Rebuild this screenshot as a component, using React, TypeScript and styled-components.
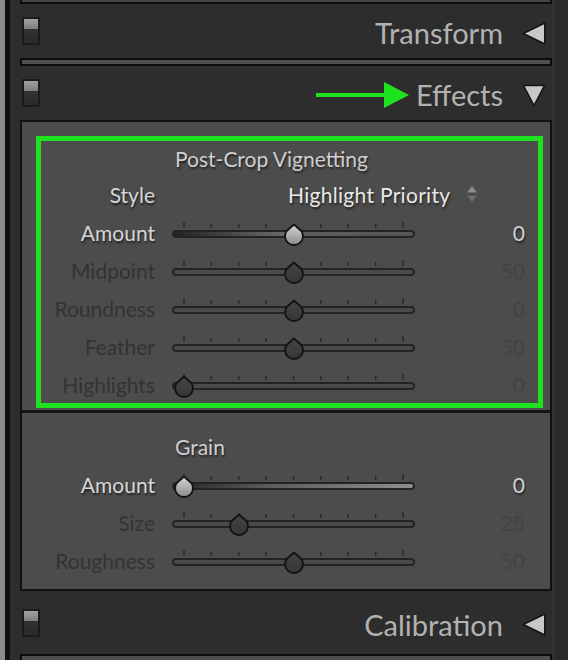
import React, { useId } from 'react';
import styled, { createGlobalStyle } from 'styled-components';

const Global = createGlobalStyle`
  html, body { margin: 0; padding: 0; background: #2d2d2d; }
  body { font-family: Lato, "Open Sans", sans-serif; }
`;

const Screen = styled.div`
  display: flex;
  width: 568px;
  height: 660px;
  overflow: hidden;
  background: #2d2d2d;
`;

const LeftEdge = styled.div`
  flex: 0 0 5px;
  background: #8a8a8a;
  border-right: 5px solid #0f0f0f;
`;

const RightEdge = styled.div`
  flex: 0 0 14px;
  background: #2a2a2a;
  border-left: 1px solid #383838;
`;

const Main = styled.div`
  flex: 1;
  display: flex;
  flex-direction: column;
  padding: 0 1px 0 10px;
  background: #2d2d2d;
`;

const Stub = styled.div`
  flex: 0 0 auto;
  height: 2px;
  background: #454545;
  border: 2px solid #0d0d0d;
  border-top: none;
`;

const CollapsedBar = styled.div`
  flex: 0 0 auto;
  height: 4px;
  background: #4f4f4f;
  border: 2px solid #0c0c0c;
`;

const Header = styled.div<{ $h: number }>`
  flex: 0 0 auto;
  display: flex;
  align-items: center;
  height: ${(p) => p.$h}px;
  padding: 0 6px 0 2px;
`;

const Switch = styled.div`
  width: 18px;
  height: 28px;
  box-sizing: border-box;
  border: 2px solid #1b1b1b;
  background: linear-gradient(#a2a2a2, #7d7d7d 42%, #323232 42%, #2a2a2a);
`;

const TitleGroup = styled.div`
  margin-left: auto;
  display: flex;
  align-items: center;
`;

const HeaderTitle = styled.span`
  margin-top: 3px;
  font-size: 29px;
  line-height: 1;
  color: #b2b2b2;
`;

const CaretSvg = styled.svg`
  margin-left: 19px;
  margin-top: 4px;
  display: block;
`;

const ArrowSvg = styled.svg`
  display: block;
  margin-right: 6px;
  margin-top: 3px;
`;

const Panel = styled.div`
  flex: 0 0 auto;
  display: flex;
  flex-direction: column;
  border: 2px solid #111;
  background: #4c4c4c;
`;

const HighlightBox = styled.div`
  margin: 14px 7px 2px 14px;
  border: 5px solid #1fe21f;
  display: flex;
  flex-direction: column;
`;

const Divider = styled.div`
  height: 3px;
  background: #161616;
`;

const GrainSection = styled.div`
  display: flex;
  flex-direction: column;
  padding: 14px 0 10px 19px;
`;

const SectionTitle = styled.div<{ $h: number }>`
  height: ${(p) => p.$h}px;
  display: flex;
  align-items: center;
  padding-left: 134px;
  font-size: 21px;
  color: #cfcfcf;
  text-shadow: 1px 2px 2px rgba(0, 0, 0, 0.55);
`;

const Row = styled.div`
  height: 38px;
  display: flex;
  align-items: center;
`;

const Label = styled.span<{ $on: boolean }>`
  width: 114px;
  text-align: right;
  font-size: 21px;
  color: ${(p) => (p.$on ? '#d6d6d6' : '#333333')};
  text-shadow: ${(p) => (p.$on ? '1px 2px 2px rgba(0,0,0,0.55)' : 'none')};
`;

const StyleValue = styled.span`
  margin-left: 133px;
  font-size: 21px;
  letter-spacing: 0.3px;
  color: #e8e8e8;
  text-shadow: 1px 2px 2px rgba(0, 0, 0, 0.55);
`;

const StepperSvg = styled.svg`
  display: block;
  margin-left: 16px;
`;

const SliderBox = styled.div`
  position: relative;
  align-self: stretch;
  width: 243px;
  margin-left: 17px;
  padding-top: 9px;
  box-sizing: border-box;
`;

const TicksSvg = styled.svg`
  display: block;
`;

type TrackVariant = 'off' | 'bipolar' | 'ramp';

const trackBg: Record<TrackVariant, string> = {
  off: '#4a4a4a',
  bipolar: 'linear-gradient(to right, #232323 0%, #6e6e6e 49%, #5c5c5c 51%, #565656 100%)',
  ramp: 'linear-gradient(to right, #262626 0%, #5c5c5c 40%, #8e8e8e 100%)',
};

const Track = styled.div<{ $v: TrackVariant }>`
  margin-top: 2px;
  height: 8px;
  box-sizing: border-box;
  border: 2px solid #242424;
  border-radius: 4px;
  background: ${(p) => trackBg[p.$v]};
`;

const ThumbSvg = styled.svg`
  position: absolute;
  top: 10px;
  display: block;
`;

const Value = styled.span<{ $on: boolean }>`
  width: 110px;
  text-align: right;
  font-size: 21px;
  color: ${(p) => (p.$on ? '#d2d2d2' : '#434343')};
  text-shadow: ${(p) => (p.$on ? '1px 2px 2px rgba(0,0,0,0.55)' : 'none')};
`;

const TICKS = Array.from({ length: 9 }, (_, i) => 12 + i * 27.375);

function Caret({ dir }: { dir: 'left' | 'down' }) {
  return (
    <CaretSvg width="24" height="23" viewBox="0 0 24 23">
      {dir === 'left' ? (
        <polygon points="1.2,11.5 22.8,1 22.8,22" fill="#c8c8c8" stroke="#141414" strokeWidth="1.6" strokeLinejoin="round" />
      ) : (
        <polygon points="1.5,1.5 22.5,1.5 12,21.5" fill="#c8c8c8" stroke="#141414" strokeWidth="1.6" strokeLinejoin="round" />
      )}
    </CaretSvg>
  );
}

function GreenArrow() {
  return (
    <ArrowSvg width="94" height="28" viewBox="0 0 94 28">
      <rect x="0" y="12" width="72" height="4" fill="#1fe21f" />
      <polygon points="68,1 93,14 68,27" fill="#1fe21f" />
    </ArrowSvg>
  );
}

function Thumb({ on, frac }: { on: boolean; frac: number }) {
  const id = useId().replace(/:/g, '');
  const x = 12 + frac * 219;
  return (
    <ThumbSvg style={{ left: x - 11 }} width="22" height="23" viewBox="0 0 22 23">
      <defs>
        <linearGradient id={`g${id}`} x1="0" y1="0" x2="0" y2="1">
          <stop offset="0" stopColor={on ? '#d4d4d4' : '#444'} />
          <stop offset="1" stopColor={on ? '#8c8c8c' : '#363636'} />
        </linearGradient>
      </defs>
      <path
        d="M11 1.5 L18.6 8.2 A9 9 0 1 1 3.4 8.2 Z"
        fill={`url(#g${id})`}
        stroke="#121212"
        strokeWidth="1.8"
        strokeLinejoin="round"
      />
    </ThumbSvg>
  );
}

function Slider({ frac, on, variant }: { frac: number; on: boolean; variant: TrackVariant }) {
  return (
    <SliderBox>
      <TicksSvg width="243" height="6" viewBox="0 0 243 6">
        {TICKS.map((t, i) => {
          const end = i === 0 || i === TICKS.length - 1;
          return <rect key={i} x={t - 0.75} y={end ? 0 : 2} width="1.5" height={end ? 6 : 4} fill="#2a2a2a" />;
        })}
      </TicksSvg>
      <Track $v={variant} />
      <Thumb on={on} frac={frac} />
    </SliderBox>
  );
}

type SliderRowData = { label: string; value: string; frac: number; on: boolean; variant: TrackVariant };

function SliderRow({ label, value, frac, on, variant }: SliderRowData) {
  return (
    <Row>
      <Label $on={on}>{label}</Label>
      <Slider frac={frac} on={on} variant={variant} />
      <Value $on={on}>{value}</Value>
    </Row>
  );
}

const vignetting: SliderRowData[] = [
  { label: 'Amount', value: '0', frac: 0.5, on: true, variant: 'bipolar' },
  { label: 'Midpoint', value: '50', frac: 0.5, on: false, variant: 'off' },
  { label: 'Roundness', value: '0', frac: 0.5, on: false, variant: 'off' },
  { label: 'Feather', value: '50', frac: 0.5, on: false, variant: 'off' },
  { label: 'Highlights', value: '0', frac: 0, on: false, variant: 'off' },
];

const grain: SliderRowData[] = [
  { label: 'Amount', value: '0', frac: 0, on: true, variant: 'ramp' },
  { label: 'Size', value: '25', frac: 0.25, on: false, variant: 'off' },
  { label: 'Roughness', value: '50', frac: 0.5, on: false, variant: 'off' },
];

export default function App() {
  return (
    <Screen>
      <Global />
      <LeftEdge />
      <Main>
        <Stub />
        <Header $h={54}>
          <Switch />
          <TitleGroup>
            <HeaderTitle>Transform</HeaderTitle>
            <Caret dir="left" />
          </TitleGroup>
        </Header>
        <CollapsedBar />
        <Header $h={54}>
          <Switch />
          <TitleGroup>
            <GreenArrow />
            <HeaderTitle>Effects</HeaderTitle>
            <Caret dir="down" />
          </TitleGroup>
        </Header>
        <Panel>
          <HighlightBox>
            <SectionTitle $h={34}>Post-Crop Vignetting</SectionTitle>
            <Row>
              <Label $on>Style</Label>
              <StyleValue>Highlight Priority</StyleValue>
              <StepperSvg width="12" height="20" viewBox="0 0 12 20">
                <polygon points="6,2 11,8.5 1,8.5" fill="#8a8a8a" />
                <polygon points="1,11.5 11,11.5 6,18" fill="#6c6c6c" />
              </StepperSvg>
            </Row>
            {vignetting.map((r) => (
              <SliderRow key={r.label} {...r} />
            ))}
          </HighlightBox>
          <Divider />
          <GrainSection>
            <SectionTitle $h={38}>Grain</SectionTitle>
            {grain.map((r) => (
              <SliderRow key={r.label} {...r} />
            ))}
          </GrainSection>
        </Panel>
        <Header $h={63}>
          <Switch />
          <TitleGroup>
            <HeaderTitle>Calibration</HeaderTitle>
            <Caret dir="left" />
          </TitleGroup>
        </Header>
        <CollapsedBar />
      </Main>
      <RightEdge />
    </Screen>
  );
}
